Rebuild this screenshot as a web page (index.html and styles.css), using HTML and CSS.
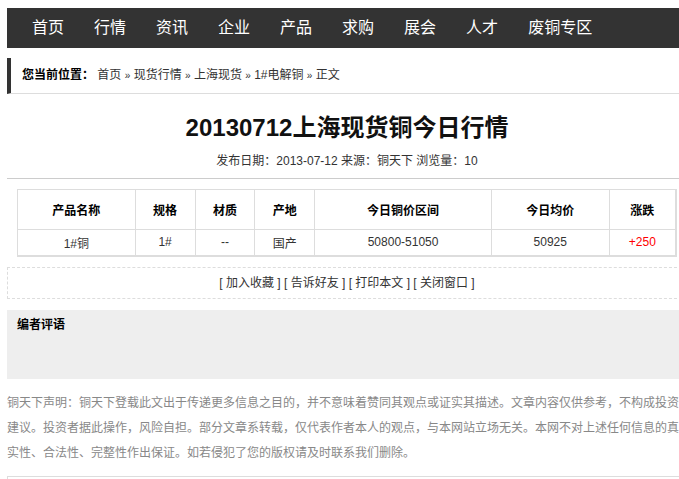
FILE: index.html
```html
<!DOCTYPE html>
<html lang="zh-CN">
<head>
    <meta charset="UTF-8">
    <meta name="viewport" content="width=device-width, initial-scale=1.0">
    <title>20130712上海现货铜今日行情</title>
    <link rel="stylesheet" href="styles.css">
</head>
<body>
    <div class="page">
        <div class="nav">
            <a href="#">首页</a>
            <a href="#">行情</a>
            <a href="#">资讯</a>
            <a href="#">企业</a>
            <a href="#">产品</a>
            <a href="#">求购</a>
            <a href="#">展会</a>
            <a href="#">人才</a>
            <a href="#">废铜专区</a>
        </div>

        <div class="crumbs">
            <b>您当前位置：</b> <a href="#">首页</a> <span class="sep">»</span> <a href="#">现货行情</a> <span class="sep">»</span> <a href="#">上海现货</a> <span class="sep">»</span> <a href="#">1#电解铜</a> <span class="sep">»</span> 正文
        </div>

        <div class="article-head">
            <h1>20130712上海现货铜今日行情</h1>
            <div class="meta">发布日期：2013-07-12 来源：铜天下 浏览量：10</div>
        </div>

        <table class="price-table">
            <tr>
                <th class="c-name">产品名称</th>
                <th class="c-spec">规格</th>
                <th class="c-mat">材质</th>
                <th class="c-place">产地</th>
                <th class="c-range">今日铜价区间</th>
                <th class="c-avg">今日均价</th>
                <th class="c-chg">涨跌</th>
            </tr>
            <tr>
                <td>1#铜</td>
                <td>1#</td>
                <td>--</td>
                <td>国产</td>
                <td>50800-51050</td>
                <td>50925</td>
                <td class="up">+250</td>
            </tr>
        </table>

        <div class="tools">
            <a href="#">[ 加入收藏 ]</a> <a href="#">[ 告诉好友 ]</a> <a href="#">[ 打印本文 ]</a> <a href="#">[ 关闭窗口 ]</a>
        </div>

        <div class="comment">
            <h3>编者评语</h3>
        </div>

        <p class="notice">铜天下声明：铜天下登载此文出于传递更多信息之目的，并不意味着赞同其观点或证实其描述。文章内容仅供参考，不构成投资<br>建议。投资者据此操作，风险自担。部分文章系转载，仅代表作者本人的观点，与本网站立场无关。本网不对上述任何信息的真<br>实性、合法性、完整性作出保证。如若侵犯了您的版权请及时联系我们删除。</p>

        <div class="related"></div>
    </div>
</body>
</html>
```

FILE: styles.css
```css
* {
    margin: 0;
    padding: 0;
    box-sizing: border-box;
}

html, body {
    overflow: hidden;
}

body {
    font-family: "Liberation Sans", "Noto Sans CJK SC", sans-serif;
    font-size: 12px;
    color: #333;
    background: #fff;
}

a {
    color: #333;
    text-decoration: none;
}

.page {
    width: 680px;
    margin: 8px 0 0 7px;
}

.nav {
    display: flex;
    gap: 30px;
    height: 40px;
    align-items: center;
    padding-left: 25px;
    background: #333;
}

.nav a {
    color: #fff;
    font-size: 16px;
    line-height: 20px;
    white-space: nowrap;
}

.crumbs {
    margin-top: 10px;
    height: 36px;
    line-height: 35px;
    padding-left: 11px;
    border-left: 4px solid #333;
    border-bottom: 1px solid #ddd;
}

.crumbs b {
    color: #000;
}

.crumbs .sep {
    font-size: 10px;
}

.article-head {
    text-align: center;
    padding: 19px 0 7px;
    border-bottom: 1px solid #ccc;
}

.article-head h1 {
    font-size: 24px;
    line-height: 30px;
    color: #111;
}

.meta {
    margin-top: 8px;
    line-height: 20px;
}

.price-table {
    width: 660px;
    margin: 10px 10px 0;
    border-collapse: collapse;
    border-right: 2px solid #ddd;
    border-bottom: 2px solid #ddd;
    text-align: center;
}

.price-table th,
.price-table td {
    border: 1px solid #ddd;
}

.price-table th {
    height: 40px;
    color: #000;
}

.price-table td {
    height: 26px;
}

.c-name { width: 118px; }
.c-spec { width: 60px; }
.c-mat { width: 60px; }
.c-place { width: 60px; }
.c-range { width: 177px; }
.c-avg { width: 118px; }
.c-chg { width: 67px; }

.price-table .up {
    color: #f00;
}

.tools {
    margin-top: 10px;
    height: 32px;
    line-height: 30px;
    text-align: center;
    border: 1px dashed #ddd;
}

.comment {
    margin-top: 11px;
    height: 69px;
    padding: 8px 10px;
    background: #eee;
}

.comment h3 {
    font-size: 12px;
    line-height: 14px;
    color: #000;
}

.notice {
    margin-top: 12px;
    line-height: 25px;
    color: #888;
    white-space: nowrap;
}

.related {
    margin-top: 10px;
    height: 30px;
    border: 1px solid #ddd;
}
```
